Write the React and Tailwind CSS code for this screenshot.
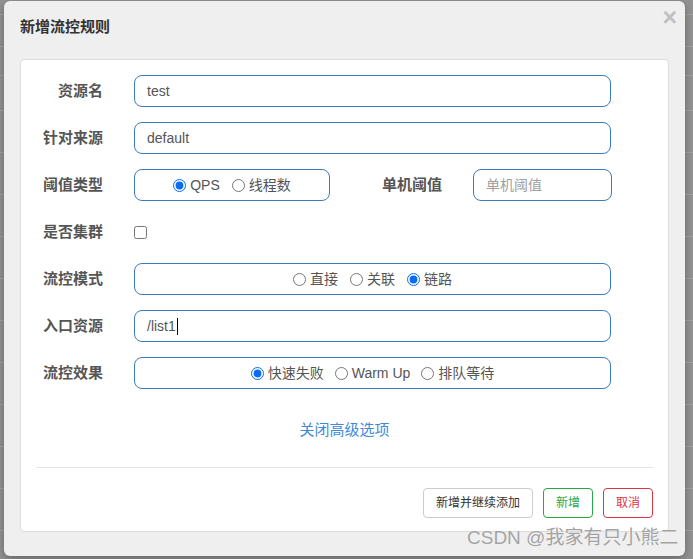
import React from "react";

const FONT = "font-['Liberation_Sans','Noto_Sans_CJK_SC',sans-serif]";

function Label({ children, className = "" }) {
  return (
    <div className={`text-right text-[15px] font-bold text-[#555] leading-5 ${className}`}>
      {children}
    </div>
  );
}

function Radio({ name, checked, label }) {
  return (
    <label className="flex items-center">
      <input
        type="radio"
        name={name}
        defaultChecked={checked}
        className="m-0 w-[13px] h-[13px] accent-[#0a6cf5]"
      />
      <span className="ml-[4px] text-[14px] text-[#555] leading-5">{label}</span>
    </label>
  );
}

function Box({ children, className = "", center = false }) {
  return (
    <div
      className={`h-[32px] border border-[#3c7bbd] rounded-[8px] flex items-center px-[12px] text-[14px] text-[#555] leading-5 ${
        center ? "justify-center" : ""
      } ${className}`}
    >
      {children}
    </div>
  );
}

const lines = [15, 47, 76, 111, 153, 195, 237, 279, 321, 363, 405, 447, 489, 531];

export default function App() {
  const heights = lines.map((y, i) => (i === 0 ? y : y - lines[i - 1]));
  return (
    <div className={`relative w-[693px] h-[559px] overflow-hidden bg-[#939393] ${FONT}`}>
      {/* backdrop rows */}
      <div className="flex flex-col">
        {heights.map((h, i) => (
          <div key={i} className="border-b border-[#a2a2a2]" style={{ height: h }} />
        ))}
      </div>

      {/* modal */}
      <div className="absolute left-[4px] top-[1px] w-[681px] h-[555px] bg-[#efefef] rounded-[6px] shadow-[0_3px_9px_rgba(0,0,0,0.3)] flex flex-col">
        <div className="h-[58px] pl-[16px] pt-[16px]">
          <div className="text-[15px] font-bold text-[#333] leading-5">新增流控规则</div>
        </div>
        <button className="absolute right-[8px] top-[2px] text-[25px] font-bold text-[#c0c0c0] leading-7 font-['Liberation_Sans',sans-serif]">
          ×
        </button>

        <div className="mx-[16px] h-[473px] bg-white border border-[#dcdcdc] rounded-[4px] pt-[15px] flex flex-col">
          <div className="flex flex-col gap-[15px]">
            <div className="flex items-center">
              <Label className="w-[82px]">资源名</Label>
              <Box className="ml-[31px] w-[477px]">test</Box>
            </div>
            <div className="flex items-center">
              <Label className="w-[82px]">针对来源</Label>
              <Box className="ml-[31px] w-[477px]">default</Box>
            </div>
            <div className="flex items-center">
              <Label className="w-[82px]">阈值类型</Label>
              <Box className="ml-[31px] w-[196px] gap-[12px]" center>
                <Radio name="grade" checked label="QPS" />
                <Radio name="grade" label="线程数" />
              </Box>
              <Label className="w-[112px]">单机阈值</Label>
              <Box className="ml-[31px] w-[139px] text-[#a0a0a0]">单机阈值</Box>
            </div>
            <div className="flex items-center h-[32px]">
              <Label className="w-[82px]">是否集群</Label>
              <div className="ml-[31px] flex items-center">
                <input type="checkbox" className="m-0 w-[13px] h-[13px]" />
              </div>
            </div>
            <div className="flex items-center">
              <Label className="w-[82px]">流控模式</Label>
              <Box className="ml-[31px] w-[477px] gap-[12px]" center>
                <Radio name="strategy" label="直接" />
                <Radio name="strategy" label="关联" />
                <Radio name="strategy" checked label="链路" />
              </Box>
            </div>
            <div className="flex items-center">
              <Label className="w-[82px]">入口资源</Label>
              <Box className="ml-[31px] w-[477px]">
                <span>/list1</span>
                <span className="ml-px w-px h-[17px] bg-black" />
              </Box>
            </div>
            <div className="flex items-center">
              <Label className="w-[82px]">流控效果</Label>
              <Box className="ml-[31px] w-[477px] gap-[11px]" center>
                <Radio name="behavior" checked label="快速失败" />
                <Radio name="behavior" label="Warm Up" />
                <Radio name="behavior" label="排队等待" />
              </Box>
            </div>
          </div>

          <div className="mt-[31px] text-center text-[15px] leading-5 text-[#3f8ad6]">关闭高级选项</div>

          <div className="mx-[15px] mt-[27px] border-t border-[#e5e5e5]" />

          <div className="mt-[20px] mr-[15px] flex justify-end gap-[10px]">
            <button className="px-[12px] py-[5px] text-[12px] leading-[18px] text-[#333] bg-white border border-[#cccccc] rounded-[4px]">
              新增并继续添加
            </button>
            <button className="px-[12px] py-[5px] text-[12px] leading-[18px] text-[#28a745] bg-white border border-[#28a745] rounded-[4px]">
              新增
            </button>
            <button className="px-[12px] py-[5px] text-[12px] leading-[18px] text-[#dc3545] bg-white border border-[#dc3545] rounded-[4px]">
              取消
            </button>
          </div>
        </div>
      </div>

      {/* watermark */}
      <div className="absolute left-[467px] top-[526px] text-[19px] leading-6 text-[#a3a3a3] [text-shadow:0_0_1px_#ffffff] whitespace-nowrap">
        CSDN @我家有只小熊二
      </div>
    </div>
  );
}
